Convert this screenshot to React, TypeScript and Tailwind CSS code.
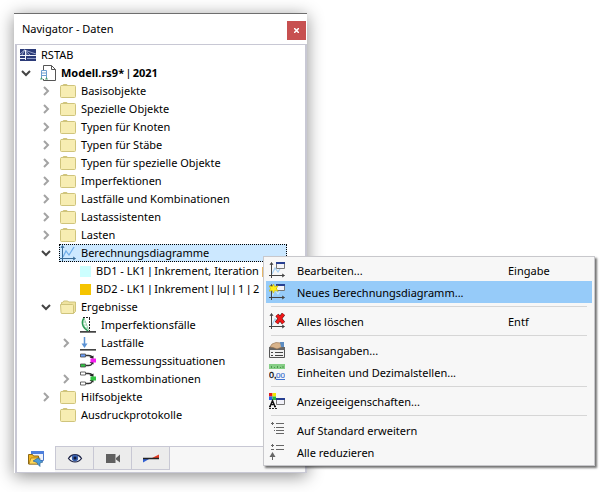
import type { ReactNode } from "react";

const Svg = ({ children }: { children: ReactNode }) => (
  <svg aria-hidden="true" viewBox="0 0 16 16" className="size-4 shrink-0">
    {children}
  </svg>
);

const Folder = () => (
  <Svg>
    <path d="M.5 3.500q0-1 1-1h1l.8-1h3.600l.8 1h6.800q1 0 1 1v10q0 1-1 1h-13q-1 0-1-1z" fill="#f7edb2" stroke="#cfc47c" />
    <path d="M1 2.500h7" stroke="#cfc47c" />
  </Svg>
);

const FolderOpen = () => (
  <Svg>
    <path d="M1.500 14V3.500h1.200l1-1.500h4l1 1H15.500v9.500l-2 2z" fill="#efe3a0" stroke="#cfc47c" />
    <path d="M.5 5.500h12q1 0 1 1v8h-11.500q-1 0-1-1z" fill="#f7edb2" stroke="#cfc47c" />
  </Svg>
);

const Bridge = () => (
  <Svg>
    <path d="M0 2h16v12H0z" fill="#2b3a78" />
    <path d="M0 8.500h16M0 11.500h5" stroke="#f2f5fb" />
    <path d="M0 7l4.500-4L10 8M4.500 3L16 7M4.500 3L2 8M4.500 3L7 8" stroke="#b4bfdd" strokeWidth=".8" fill="none" />
    <path d="M5.500 3v10" stroke="#f2f5fb" />
    <path d="M7 11.500h9" stroke="#8e9bc6" />
  </Svg>
);

const Model = () => (
  <Svg>
    <path d="M3.500 5V.5h8l4 4v11H3.500V14" fill="#fff" stroke="#555" />
    <path d="M11.500.5v4h4" fill="none" stroke="#555" />
    <path d="M1.500 13V5.500h5V13M1.500 8h5M1.500 10.500h5" fill="none" stroke="#6d9fd0" />
    <path d="M0 14.500l1.500-2.500 1.500 2.500zM5 14.500L6.500 12 8 14.500z" fill="#4b9c73" />
  </Svg>
);

const Axes = ({ color = "#444" }: { color?: string }) => (
  <>
    <path d="M2.500 16V1M0 13.500h15" stroke={color} fill="none" />
    <path d="M1 3l1.500-2.500L4 3M13 12l2.500 1.500L13 15" stroke={color} fill="none" />
  </>
);

const Curve = ({ color = "#a8d1f2" }: { color?: string }) => (
  <path d="M3 12l3-6 3 4 5-8" stroke={color} fill="none" strokeWidth="1.200" />
);

const Dialog = () => (
  <>
    <path d="M7.500.5h8v6h-8z" fill="#f4f4f8" stroke="#777" />
    <path d="M7 0h9v2H7z" fill="#273f91" />
  </>
);

const Chart = () => (
  <Svg>
    <Curve color="#6dadea" />
    <Axes color="#386b98" />
  </Svg>
);

const ChartEdit = () => (
  <Svg>
    <Curve />
    <Axes />
    <Dialog />
  </Svg>
);

const ChartNew = () => (
  <Svg>
    <Curve color="#c9e8ff" />
    <Axes />
    <Dialog />
    <path d="M4.500 0l1.200 2.600L9 1.800 7.500 4.500 9 7.200 5.700 6.600 4.500 9.200 3.300 6.600 0 7.200l1.500-2.700L0 1.800l3.300.8z" fill="#ffef18" stroke="#c5aa00" strokeWidth=".5" />
  </Svg>
);

const ChartDelete = () => (
  <Svg>
    <Curve />
    <Axes />
    <path d="M8 2l6.500 8M14.500 1L7.500 10" stroke="#222" strokeWidth="4" />
    <path d="M8 2l6.500 8M14.500 1L7.500 10" stroke="#f01818" strokeWidth="3" />
  </Svg>
);

const Imperfection = () => (
  <Svg>
    <path d="M0 15h16" stroke="#777" strokeWidth="2" />
    <path d="M0 14.500h16" stroke="#444" />
    <path d="M8 14C2 10 1 5 4 1" stroke="#2b9b55" strokeWidth="1.500" fill="none" />
    <path d="M4 1l5 13M3 5h3M3 8h4M5 11h3" stroke="#82c698" fill="none" strokeWidth=".8" />
    <path d="M3 .5h7M9.500 1v13" stroke="#222" strokeDasharray="2 1" />
  </Svg>
);

const Load = () => (
  <Svg>
    <path d="M0 14.500h16" stroke="#444" />
    <path d="M0 15.500h16" stroke="#888" />
    <path d="M4.500 2v8" stroke="#5b92d4" strokeWidth="1.500" />
    <path d="M1.500 8.500h6l-3 4.500z" fill="#5b92d4" />
  </Svg>
);

const Combo = ({ a, b, c }: { a: string; b: string; c: string }) => (
  <Svg>
    <path d="M6 2.500h2.500q3 0 3.500 2M6 12.500h2.500q3 0 3.500-2" stroke="#333" strokeWidth="1.300" fill="none" />
    <path d="M9.500 4.500l4-2V6zM9.500 9.500l4 2V8z" fill="#222" />
    <path d="M.5 1h5v3h-5z" fill={a} stroke="#444" strokeWidth=".8" />
    <path d="M.5 11h5v3h-5z" fill={b} stroke="#444" strokeWidth=".8" />
    <path d="M10.500 5.500H16v4h-5.500z" fill={c} />
  </Svg>
);

const Swatch = ({ color }: { color: string }) => (
  <svg aria-hidden="true" viewBox="0 0 11 11" className="size-[11px] shrink-0">
    <path d="M0 0h11v11H0z" fill={color} />
  </svg>
);

const Details = () => (
  <Svg>
    <path d="M.5 5.500h15v10H.5z" fill="#f2f2f2" stroke="#555" />
    <path d="M0 5h16v3H0z" fill="#666" />
    <path d="M2 10.500h2M6 10.500h8M2 13.500h2M6 13.500h8" stroke="#444" />
    <path d="M1 5l2-3 4-1.500 5 .5 1 4-5 2-4-1.500z" fill="#d9b48c" stroke="#8d6b4b" strokeWidth=".6" />
    <path d="M11 0h4v5h-3z" fill="#5b8cc2" />
  </Svg>
);

const Units = () => (
  <Svg>
    <path d="M0 0h16v5H0z" fill="#86ce86" />
    <path d="M2.500 2v2M5.500 3v1M8.500 2v2M11.500 3v1M14 2v2" stroke="#4b994b" />
    <text x="0" y="14" fontSize="9" fontFamily="Liberation Sans, sans-serif" fill="#111" stroke="#111" strokeWidth=".3">0,</text>
    <text x="7" y="14" fontSize="8" fontFamily="Liberation Sans, sans-serif" fill="#3f74d1" stroke="#3f74d1" strokeWidth=".2">00</text>
    <path d="M7 15.500h9" stroke="#3f74d1" />
  </Svg>
);

const Display = () => (
  <Svg>
    <path d="M0 0h3.500v3.500H0z" fill="#e51b1b" />
    <path d="M3.500 0H7v3.500H3.500z" fill="#f3e600" />
    <path d="M0 3.500h3.500V7H0z" fill="#2862e8" />
    <path d="M3.500 3.500H7V7H3.500z" fill="#28b83a" />
    <path d="M1 13.500l2.500-6 2.500 6M2 11.500h3M0 13.500h2M5 13.500h2" stroke="#111" fill="none" strokeWidth="1.300" />
    <path d="M0 15.500h8" stroke="#222" strokeDasharray="2 1" />
    <path d="M7.500 5.500h8v6h-8z" fill="#f1f1f8" stroke="#777" />
    <path d="M7 5h9v2H7z" fill="#273f91" />
  </Svg>
);

const Expand = () => (
  <Svg>
    <path d="M2 1.500h3M3.500 0v3M7 1.500h8M5 5.500h1M7 5.500h8M5 8.500h1M7 8.500h8M7 11.500h8" stroke="#666" />
  </Svg>
);

const Collapse = () => (
  <Svg>
    <path d="M2 1.500h3M3.500 0v3M7 1.500h8M2 5.500h3M7 5.500h8M3.500 16v-5" stroke="#666" />
    <path d="M.5 13l3-5 3 5z" fill="#666" />
  </Svg>
);

const DataTab = () => (
  <Svg>
    <path d="M3.500.5h12v9h-12z" fill="#eef2fb" stroke="#4d78c8" />
    <path d="M3 0h13v3H3z" fill="#4d7fdd" />
    <path d="M.5 3.500h4l1 1.500h5v8H.5z" fill="#f5b61d" stroke="#8b6817" />
    <path d="M1 13l2-6h9l-2 6z" fill="#ffd75c" stroke="#8b6817" strokeWidth=".6" />
    <path d="M5 10l5-3 5 4-3 1v3.500l-2-2-1-2z" fill="#4a9cda" stroke="#275e91" strokeWidth=".6" />
  </Svg>
);

const Eye = () => (
  <Svg>
    <path d="M1.500 8.500c3-5 10-5 13 0-3 4.500-10 4.500-13 0z" fill="#fff" stroke="#22284a" strokeWidth="1.300" />
    <circle cx="8" cy="8" r="3.200" fill="#355eac" />
    <circle cx="8" cy="8" r="1.500" fill="#111936" />
  </Svg>
);

const Camera = () => (
  <Svg>
    <path d="M1 4h9.500v9H1zM11 8l4-3.500v8L11 9.500z" fill="#606060" />
  </Svg>
);

const Result = () => (
  <Svg>
    <path d="M0 8.500v4l7-4z" fill="#315fd0" />
    <path d="M9 8L16 4.500V8z" fill="#e33b22" />
    <path d="M0 8.500h16" stroke="#222" strokeWidth="1.500" />
  </Svg>
);

type Node = { label: string; level: 1 | 2 | 3; icon: ReactNode; arrow?: "open" | "closed"; selected?: boolean; bold?: boolean };

const nodes: Node[] = [
  { label: "Modell.rs9* | 2021", level: 1, icon: <Model />, arrow: "open", bold: true },
  { label: "Basisobjekte", level: 2, icon: <Folder />, arrow: "closed" },
  { label: "Spezielle Objekte", level: 2, icon: <Folder />, arrow: "closed" },
  { label: "Typen für Knoten", level: 2, icon: <Folder />, arrow: "closed" },
  { label: "Typen für Stäbe", level: 2, icon: <Folder />, arrow: "closed" },
  { label: "Typen für spezielle Objekte", level: 2, icon: <Folder />, arrow: "closed" },
  { label: "Imperfektionen", level: 2, icon: <Folder />, arrow: "closed" },
  { label: "Lastfälle und Kombinationen", level: 2, icon: <Folder />, arrow: "closed" },
  { label: "Lastassistenten", level: 2, icon: <Folder />, arrow: "closed" },
  { label: "Lasten", level: 2, icon: <Folder />, arrow: "closed" },
  { label: "Berechnungsdiagramme", level: 2, icon: <Chart />, arrow: "open", selected: true },
  { label: "BD1 - LK1 | Inkrement, Iteration |", level: 3, icon: <Swatch color="#ccffff" /> },
  { label: "BD2 - LK1 | Inkrement | |u| | 1 | 2", level: 3, icon: <Swatch color="#f5c400" /> },
  { label: "Ergebnisse", level: 2, icon: <FolderOpen />, arrow: "open" },
  { label: "Imperfektionsfälle", level: 3, icon: <Imperfection /> },
  { label: "Lastfälle", level: 3, icon: <Load />, arrow: "closed" },
  { label: "Bemessungssituationen", level: 3, icon: <Combo a="#6c9df5" b="#31c443" c="#f61cf0" /> },
  { label: "Lastkombinationen", level: 3, icon: <Combo a="#fff" b="#fff" c="#31c443" />, arrow: "closed" },
  { label: "Hilfsobjekte", level: 2, icon: <Folder />, arrow: "closed" },
  { label: "Ausdruckprotokolle", level: 2, icon: <Folder /> },
];

const indent = { 1: "pl-[3px]", 2: "pl-[23px]", 3: "pl-[43px]" };

const Arrow = ({ state }: { state: "open" | "closed" }) => (
  <button aria-label={state === "open" ? "Reduzieren" : "Erweitern"} className="flex h-4 w-3 items-center justify-center">
    <svg viewBox="0 0 12 12" className="size-3" fill="none" strokeWidth="2">
      {state === "open" ? <path d="M2 4l4 4 4-4" stroke="#444" /> : <path d="M4 2l4 4-4 4" stroke="#a3a3a3" />}
    </svg>
  </button>
);

// The separator bars use a face with a narrower glyph than the text around them.
const Label = ({ text }: { text: string }) => (
  <span className="whitespace-pre">
    {text.split(/(\|)/).map((part, i) =>
      part === "|" ? (
        <span key={i} className="font-['Liberation_Sans',sans-serif] font-normal">
          |
        </span>
      ) : (
        part
      ),
    )}
  </span>
);

const TreeRow = ({ node }: { node: Node }) => (
  <li className={`flex h-[18px] items-center ${indent[node.level]}`}>
    <span className="flex w-[19px] shrink-0">{node.arrow && <Arrow state={node.arrow} />}</span>
    <span
      className={`flex h-full min-w-0 items-center gap-[5px] pl-px ${node.bold ? "font-bold" : ""} ${
        node.selected ? "mr-[18px] grow bg-[#cce8ff] outline-1 -outline-offset-1 outline-dotted outline-black" : ""
      }`}
    >
      {node.icon}
      <Label text={node.label} />
    </span>
  </li>
);

type Entry = { label: string; icon: ReactNode; shortcut?: string; active?: boolean };

const groups: Entry[][] = [
  [
    { label: "Bearbeiten...", icon: <ChartEdit />, shortcut: "Eingabe" },
    { label: "Neues Berechnungsdiagramm...", icon: <ChartNew />, active: true },
  ],
  [{ label: "Alles löschen", icon: <ChartDelete />, shortcut: "Entf" }],
  [
    { label: "Basisangaben...", icon: <Details /> },
    { label: "Einheiten und Dezimalstellen...", icon: <Units /> },
  ],
  [{ label: "Anzeigeeigenschaften...", icon: <Display /> }],
  [
    { label: "Auf Standard erweitern", icon: <Expand /> },
    { label: "Alle reduzieren", icon: <Collapse /> },
  ],
];

const ContextMenu = () => (
  <div
    role="menu"
    className="absolute top-[256px] right-[5px] left-[263px] border border-[#c8c8cc] bg-[#f7f7f7] p-0.5 shadow-[2px_2px_2px_rgba(0,0,0,0.55)]"
  >
    {groups.map((group, i) => (
      <div key={i} role="group">
        {i > 0 && <hr className="mx-[5px] my-[3px] border-[#d6d6d6]" />}
        {group.map((entry) => (
          <button
            key={entry.label}
            role="menuitem"
            className={`flex h-[22px] w-full items-center pl-[3px] text-left ${entry.active ? "bg-[#96cbf9]" : ""}`}
          >
            {entry.icon}
            <span className="mt-0.5 ml-3 grow">{entry.label}</span>
            {entry.shortcut && <span className="mt-0.5 w-[84px]">{entry.shortcut}</span>}
          </button>
        ))}
      </div>
    ))}
  </div>
);

const tabs = [
  { label: "Zeigen", icon: <Eye /> },
  { label: "Ansichten", icon: <Camera /> },
  { label: "Ergebnisse", icon: <Result /> },
];

export default function App() {
  return (
    <main className="relative min-h-screen overflow-hidden bg-white pt-[13px] pl-3.5 font-['Noto_Sans','Open_Sans',sans-serif] text-[11px] leading-4 text-black">
      <section className="w-[293px] border-t border-[#6e6e6e] bg-white shadow-[0_3px_16px_rgba(0,0,0,0.45)]">
        <header className="flex h-[30px] items-center justify-between pr-px pl-2">
          <h1>Navigator - Daten</h1>
          <button aria-label="Schließen" className="mt-[3px] flex size-[19px] items-center justify-center bg-[#c75050]">
            <svg viewBox="0 0 5 5" className="size-[5px]">
              <path d="M0 0l5 5M5 0L0 5" stroke="#fff" strokeWidth="1.500" />
            </svg>
          </button>
        </header>
        <div className="ml-px border-x-2 border-y border-[#c8c8d4]">
          <ul className="h-[401px] pt-px">
            <li className="flex h-[18px] items-center gap-[5px] pl-[3px]">
              <Bridge />
              RSTAB
            </li>
            {nodes.map((node) => (
              <TreeRow key={node.label} node={node} />
            ))}
          </ul>
          <nav className="flex h-[26px] bg-[#f7f7f7]">
            <button aria-label="Daten" className="flex w-[38px] items-center justify-center bg-white">
              <DataTab />
            </button>
            <div className="flex grow items-start border-t border-[#c8c8d4]">
              {tabs.map((tab) => (
                <button
                  key={tab.label}
                  aria-label={tab.label}
                  className="flex h-[23px] w-[38px] items-center justify-center border-r border-b border-[#c8c8d4] bg-[#ececec] first:w-[39px] first:border-l"
                >
                  {tab.icon}
                </button>
              ))}
            </div>
          </nav>
        </div>
      </section>
      <ContextMenu />
    </main>
  );
}
